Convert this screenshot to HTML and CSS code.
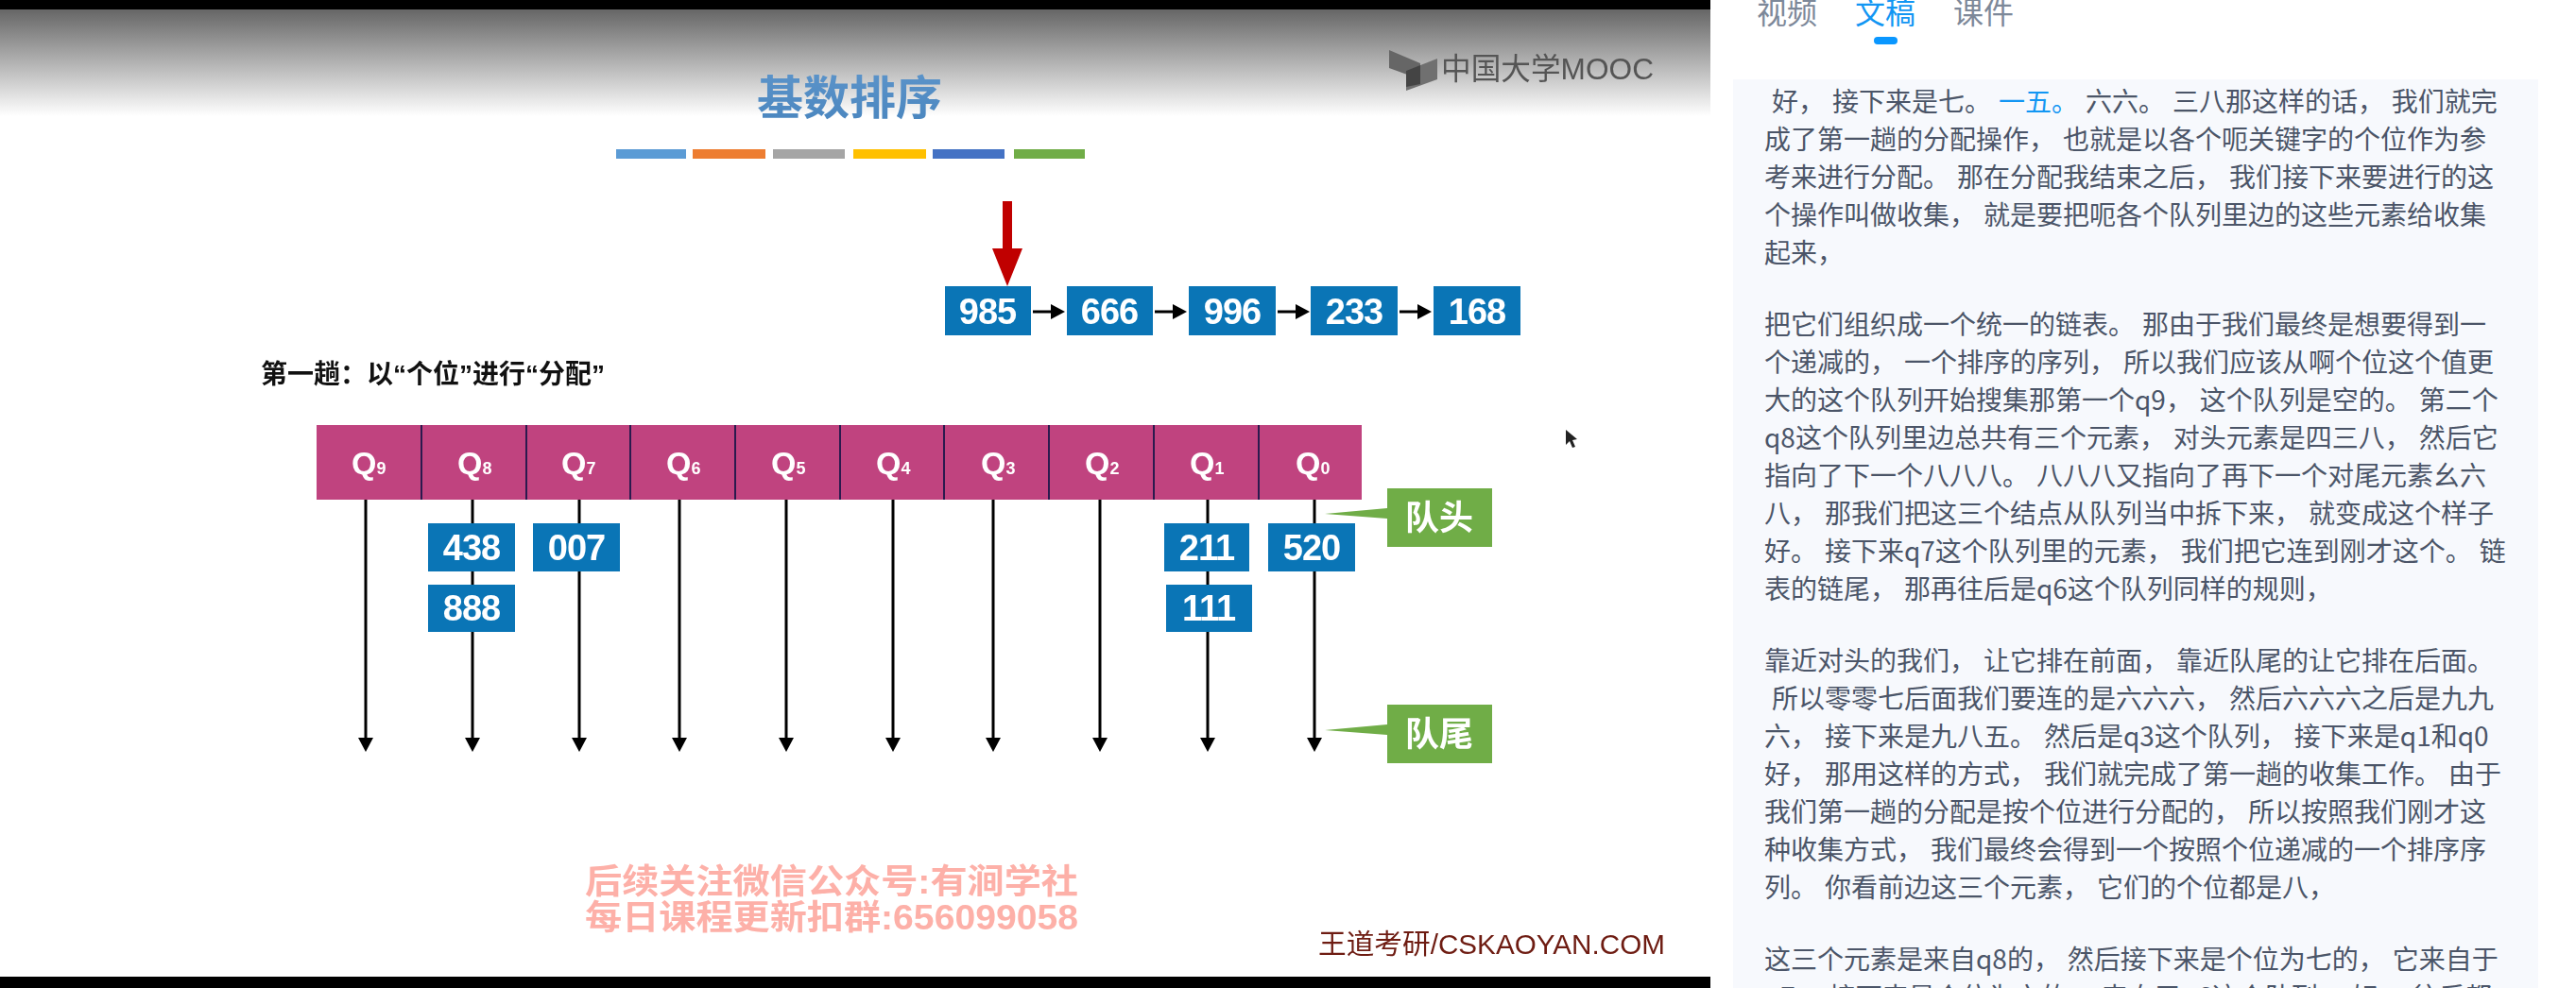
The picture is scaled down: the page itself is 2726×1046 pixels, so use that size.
FILE: index.html
```html
<!DOCTYPE html>
<html lang="zh-CN">
<head>
    <meta charset="UTF-8">
    <title>基数排序</title>
    <link rel="stylesheet" href="styles.css">
</head>
<body>
    <div class="page">
        <div class="video">
            <svg class="slide" width="1810" height="1046" viewBox="0 0 1810 1046">
                <defs>
                    <linearGradient id="top-fade" x1="0" y1="0" x2="0" y2="1">
                        <stop offset="0" stop-color="#666666"/>
                        <stop offset="1" stop-color="#ffffff"/>
                    </linearGradient>
                    <linearGradient id="title-fill" x1="0" y1="0" x2="0" y2="1">
                        <stop offset="0" stop-color="#5b93c9"/>
                        <stop offset="1" stop-color="#4a86bf"/>
                    </linearGradient>
                    <marker id="head" markerUnits="userSpaceOnUse" markerWidth="15" markerHeight="16" refX="0" refY="8" orient="auto">
                        <path d="M0 0L15 8L0 16Z" fill="#000"/>
                    </marker>
                </defs>

                <rect width="1810" height="1046" fill="#fff"/>
                <rect y="10" width="1810" height="113" fill="url(#top-fade)"/>
                <rect width="1810" height="10" fill="#000"/>
                <rect y="1034" width="1810" height="12" fill="#000"/>

                <!-- header -->
                <text class="title" x="801" y="121" fill="url(#title-fill)">基数排序</text>
                <rect x="652" y="158" width="74" height="10" fill="#5b9bd5"/>
                <rect x="733" y="158" width="77" height="10" fill="#ed7d31"/>
                <rect x="818" y="158" width="76" height="10" fill="#a5a5a5"/>
                <rect x="903" y="158" width="77" height="10" fill="#ffc000"/>
                <rect x="987" y="158" width="76" height="10" fill="#4472c4"/>
                <rect x="1073" y="158" width="75" height="10" fill="#70ad47"/>

                <!-- logo -->
                <path d="M1470 53L1503 67V84L1470 72Z" fill="#666"/>
                <path d="M1488 75L1521 62V84L1488 96Z" fill="#707070"/>
                <path d="M1488 75L1503 69V89L1488 92Z" fill="#444"/>
                <text class="logo-text" x="1525" y="84" textLength="225" lengthAdjust="spacingAndGlyphs">中国大学MOOC</text>

                <!-- red pointer -->
                <path d="M1061 213H1071V263H1082L1066 303L1050 263H1061Z" fill="#c00000"/>

                <!-- linked list -->
                <g class="link">
                    <path d="M1093 330H1112"/>
                    <path d="M1222 330H1241"/>
                    <path d="M1352 330H1371"/>
                    <path d="M1481 330H1500"/>
                </g>
                <g class="node">
                    <rect x="1000" y="303" width="91" height="52"/><text x="1045" y="343">985</text>
                    <rect x="1129" y="303" width="91" height="52"/><text x="1174" y="343">666</text>
                    <rect x="1258" y="303" width="92" height="52"/><text x="1304" y="343">996</text>
                    <rect x="1387" y="303" width="92" height="52"/><text x="1433" y="343">233</text>
                    <rect x="1517" y="303" width="92" height="52"/><text x="1563" y="343">168</text>
                </g>

                <text class="pass-label" x="276" y="406">第一趟：以“个位”进行“分配”</text>

                <!-- queue header -->
                <rect x="335" y="450" width="1106" height="79" fill="#c0437f"/>
                <path class="queue-sep" d="M446 450V529M557 450V529M667 450V529M778 450V529M889 450V529M999 450V529M1110 450V529M1221 450V529M1332 450V529"/>
                <g class="queue-name">
                    <text x="372" y="502">Q<tspan class="sub">9</tspan></text>
                    <text x="484" y="502">Q<tspan class="sub">8</tspan></text>
                    <text x="594" y="502">Q<tspan class="sub">7</tspan></text>
                    <text x="705" y="502">Q<tspan class="sub">6</tspan></text>
                    <text x="816" y="502">Q<tspan class="sub">5</tspan></text>
                    <text x="927" y="502">Q<tspan class="sub">4</tspan></text>
                    <text x="1038" y="502">Q<tspan class="sub">3</tspan></text>
                    <text x="1148" y="502">Q<tspan class="sub">2</tspan></text>
                    <text x="1259" y="502">Q<tspan class="sub">1</tspan></text>
                    <text x="1371" y="502">Q<tspan class="sub">0</tspan></text>
                </g>

                <!-- queue lines -->
                <g class="link">
                    <path d="M387 529V781"/>
                    <path d="M500 529V781"/>
                    <path d="M613 529V781"/>
                    <path d="M719 529V781"/>
                    <path d="M832 529V781"/>
                    <path d="M945 529V781"/>
                    <path d="M1051 529V781"/>
                    <path d="M1164 529V781"/>
                    <path d="M1278 529V781"/>
                    <path d="M1391 529V781"/>
                </g>

                <!-- queued items -->
                <g class="node">
                    <rect x="453" y="554" width="92" height="51"/><text x="499" y="593">438</text>
                    <rect x="453" y="619" width="92" height="50"/><text x="499" y="657">888</text>
                    <rect x="564" y="554" width="92" height="51"/><text x="610" y="593">007</text>
                    <rect x="1232" y="554" width="90" height="51"/><text x="1277" y="593">211</text>
                    <rect x="1234" y="619" width="91" height="50"/><text x="1279" y="657">111</text>
                    <rect x="1342" y="554" width="92" height="51"/><text x="1388" y="593">520</text>
                </g>

                <!-- callouts -->
                <path d="M1468 517H1579V579H1468V549L1402 544L1468 538Z" fill="#70ad47"/>
                <path d="M1468 746H1579V808H1468V778L1402 773L1468 767Z" fill="#70ad47"/>
                <text class="callout" x="1523" y="561">队头</text>
                <text class="callout" x="1523" y="790">队尾</text>

                <!-- mouse pointer -->
                <path d="M1657 455V471L1661 467L1664 474L1667 473L1664 466L1669 465Z" fill="#222"/>

                <!-- watermark and credit -->
                <text class="watermark" x="619" y="946" textLength="522" lengthAdjust="spacingAndGlyphs">后续关注微信公众号:有涧学社</text>
                <text class="watermark" x="619" y="984" textLength="522" lengthAdjust="spacingAndGlyphs">每日课程更新扣群:656099058</text>
                <text class="credit" x="1395" y="1010" textLength="367" lengthAdjust="spacingAndGlyphs">王道考研/CSKAOYAN.COM</text>
            </svg>
        </div>

        <div class="sidebar">
            <div class="tabs">
                <div class="tab">视频</div>
                <div class="tab tab-active">文稿</div>
                <div class="tab">课件</div>
            </div>
            <div class="transcript">
                <p> 好， 接下来是七。 <span class="current">一五。</span> 六六。 三八那这样的话， 我们就完成了第一趟的分配操作， 也就是以各个呃关键字的个位作为参考来进行分配。 那在分配我结束之后， 我们接下来要进行的这个操作叫做收集， 就是要把呃各个队列里边的这些元素给收集起来，</p>
                <p>把它们组织成一个统一的链表。 那由于我们最终是想要得到一个递减的， 一个排序的序列， 所以我们应该从啊个位这个值更大的这个队列开始搜集那第一个q9， 这个队列是空的。 第二个q8这个队列里边总共有三个元素， 对头元素是四三八， 然后它指向了下一个八八八。 八八八又指向了再下一个对尾元素幺六八， 那我们把这三个结点从队列当中拆下来， 就变成这个样子好。 接下来q7这个队列里的元素， 我们把它连到刚才这个。 链表的链尾， 那再往后是q6这个队列同样的规则，</p>
                <p>靠近对头的我们， 让它排在前面， 靠近队尾的让它排在后面。<br> 所以零零七后面我们要连的是六六六， 然后六六六之后是九九六， 接下来是九八五。 然后是q3这个队列， 接下来是q1和q0好， 那用这样的方式， 我们就完成了第一趟的收集工作。 由于我们第一趟的分配是按个位进行分配的， 所以按照我们刚才这种收集方式， 我们最终会得到一个按照个位递减的一个排序序列。 你看前边这三个元素， 它们的个位都是八，</p>
                <p>这三个元素是来自q8的， 然后接下来是个位为七的， 它来自于q7。 接下来是个位为六的， 来自于q6这个队列。 好， 往后都</p>
            </div>
        </div>
    </div>
</body>
</html>
```

FILE: styles.css
```css
body, html {
    height: 100%;
    margin: 0;
    background: #fff;
    overflow: hidden;
    font-family: "Noto Sans CJK SC", sans-serif;
}

.page {
    display: flex;
    height: 1046px;
}

.video {
    width: 1810px;
    flex-shrink: 0;
    overflow: hidden;
}

.slide {
    display: block;
    filter: blur(0.6px);
    font-family: "Liberation Sans", "Noto Sans CJK SC", sans-serif;
}

.title {
    font-size: 49px;
    font-weight: bold;
}

.logo-text {
    font-size: 32px;
    fill: #555;
}

.link path {
    fill: none;
    stroke: #000;
    stroke-width: 3;
    marker-end: url(#head);
}

.node rect {
    fill: #0a75b6;
}

.node text {
    fill: #fff;
    font-size: 38px;
    font-weight: bold;
    letter-spacing: -1px;
    text-anchor: middle;
}

.pass-label {
    font-size: 28px;
    font-weight: bold;
    fill: #111;
}

.queue-sep {
    fill: none;
    stroke: #2b1a4e;
    stroke-width: 2;
}

.queue-name text {
    fill: #fff;
    font-size: 34px;
    font-weight: bold;
}

.queue-name .sub {
    font-size: 18px;
}

.callout {
    fill: #fff;
    font-size: 36px;
    font-weight: bold;
    text-anchor: middle;
}

.watermark {
    fill: #fdb0a8;
    font-size: 36px;
    font-weight: bold;
}

.credit {
    fill: #6e1c12;
    font-size: 29px;
}

.sidebar {
    flex: 1;
    min-width: 0;
}

.tabs {
    display: flex;
    gap: 40px;
    height: 84px;
    padding-left: 49px;
    box-sizing: border-box;
    overflow: hidden;
}

.tab {
    display: flex;
    flex-direction: column;
    align-items: center;
    margin-top: -5px;
    font-size: 32px;
    line-height: 32px;
    color: #7d8899;
}

.tab-active {
    color: #1296f3;
}

.tab-active::after {
    content: "";
    width: 25px;
    height: 8px;
    margin-top: 12px;
    border-radius: 4px;
    background: #0a97ff;
}

.transcript {
    width: 852px;
    height: 962px;
    margin-left: 24px;
    padding: 2px 0 0 33px;
    box-sizing: border-box;
    overflow: hidden;
    background: #f7f9fd;
    color: #4b5568;
    font-size: 28px;
    line-height: 40px;
    word-spacing: 1.7px;
}

.transcript p {
    width: 788px;
    margin: 0 0 36px;
    white-space: pre-wrap;
}

.current {
    color: #1296f3;
}
```
